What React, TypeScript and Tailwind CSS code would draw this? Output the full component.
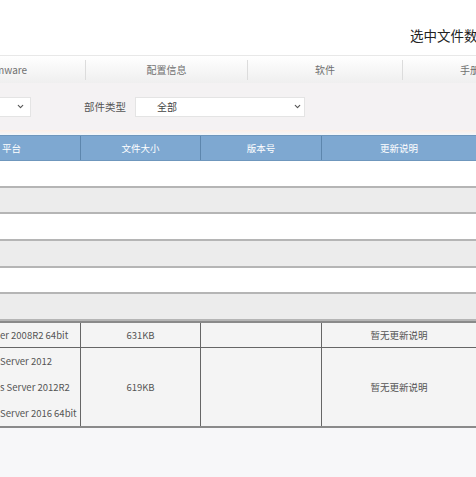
import { ChevronDown } from "lucide-react";

const TABS = [
  { label: "Firmware", width: "w-[160px] -ml-[75px]" },
  { label: "配置信息", width: "w-[161px]" },
  { label: "软件", width: "w-[154px]" },
  { label: "手册", width: "w-[134px]" },
];

const EMPTY_ROWS = ["bg-white", "bg-[#ececec]", "bg-white", "bg-[#ececec]", "bg-white", "bg-[#ececec]"];

function Select({ value, className }: { value: string; className: string }) {
  return (
    <div
      className={`flex h-[20px] items-center justify-between border border-[#e4e4e4] bg-white text-[10px] text-[#444] ${className}`}
    >
      <span>{value}</span>
      <ChevronDown className="h-[9px] w-[9px] text-[#555]" strokeWidth={3} />
    </div>
  );
}

export default function App() {
  return (
    <div className="h-[477px] w-[476px] overflow-hidden bg-[#f7f7f9] font-['Noto_Sans_CJK_SC',sans-serif]">
      {/* top bar */}
      <div className="flex h-[55px] items-end bg-white pb-[10px] pl-[410px] text-[13.5px] whitespace-nowrap text-[#222]">
        选中文件数
      </div>

      {/* tabs */}
      <div className="flex h-[28px] items-center border-t border-[#e8e8e8] bg-gradient-to-b from-white to-[#efefef] text-[10px] whitespace-nowrap text-[#707070]">
        {TABS.map((tab, i) => (
          <div key={tab.label} className="flex h-full shrink-0 items-center">
            {i > 0 && <span className="h-[20px] w-px bg-[#dcdcdc]" />}
            <span className={`flex shrink-0 justify-center ${tab.width}`}>{tab.label}</span>
          </div>
        ))}
      </div>

      {/* filters */}
      <div className="flex h-[47px] items-center bg-[#f4f2f3] text-[10.5px] text-[#555]">
        <Select value="" className="w-[32px] -ml-px pr-[5px]" />
        <span className="ml-[53px] mr-[9px]">部件类型</span>
        <Select value="全部" className="w-[170px] pl-[21px] pr-[2px]" />
      </div>
      <div className="h-[5px] bg-gradient-to-b from-[#fbefe7] to-[#f3f7fb]" />

      {/* table header */}
      <div className="grid h-[26px] grid-cols-[81px_120px_121px_1fr] border-y border-[#6f97bd] bg-[#7ea8d1] text-[9.5px] text-white">
        <div className="flex items-center border-r border-[#5d86ad] pl-[2px]">平台</div>
        <div className="flex items-center justify-center border-r border-[#5d86ad]">文件大小</div>
        <div className="flex items-center justify-center border-r border-[#5d86ad]">版本号</div>
        <div className="flex items-center justify-center">更新说明</div>
      </div>

      {/* empty group rows */}
      {EMPTY_ROWS.map((bg, i) => (
        <div key={i} className={`h-[26.7px] border-b-2 border-[#b5b5b5] ${bg}`} />
      ))}

      {/* data rows */}
      <div className="grid grid-cols-[81px_120px_121px_1fr] border-y-2 border-[#8a8a8a] bg-[#f4f4f4] text-[9.5px] whitespace-nowrap text-[#555]">
        <div className="flex h-[25px] items-center overflow-hidden border-r border-b border-[#666]">
          er 2008R2 64bit
        </div>
        <div className="flex items-center justify-center border-r border-b border-[#666]">631KB</div>
        <div className="border-r border-b border-[#666]" />
        <div className="flex items-center justify-center border-b border-[#666]">暂无更新说明</div>

        <div className="flex flex-col overflow-hidden border-r border-[#666] leading-[26px]">
          <span>Server 2012</span>
          <span>s Server 2012R2</span>
          <span>Server 2016 64bit</span>
        </div>
        <div className="flex items-center justify-center border-r border-[#666]">619KB</div>
        <div className="border-r border-[#666]" />
        <div className="flex items-center justify-center">暂无更新说明</div>
      </div>
    </div>
  );
}
